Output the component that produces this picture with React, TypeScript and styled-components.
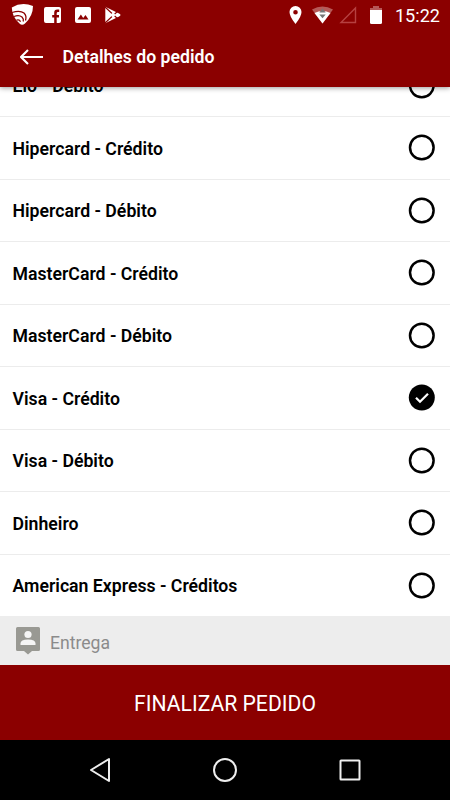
import React from "react";
import styled, { createGlobalStyle } from "styled-components";

const GlobalStyle = createGlobalStyle`
  * { box-sizing: border-box; }
  body { margin: 0; background: #000; font-family: Roboto, "Liberation Sans", sans-serif; }
  svg { display: block; flex: none; }
`;

const Screen = styled.div`
  width: 450px;
  height: 800px;
  display: flex;
  flex-direction: column;
  overflow: hidden;
  background: #fff;
`;

const Header = styled.header`
  height: 87px;
  flex: none;
  z-index: 1;
  background: #8b0000;
  color: #fff;
  box-shadow: 0 1px 5px rgba(0, 0, 0, 0.4);
`;

const StatusBar = styled.div`
  height: 30px;
  display: flex;
  align-items: center;
  justify-content: space-between;
  padding: 0 10px;
`;

const Notifications = styled.div`
  display: flex;
`;

const SystemStatus = styled.div`
  display: flex;
  align-items: center;
`;

const Clock = styled.time`
  font-size: 18.1px;
  line-height: 30px;
  margin-top: 2px;
`;

const Toolbar = styled.div`
  height: 57px;
  display: flex;
  align-items: center;
  padding: 0 0 3px 20px;
`;

const BackButton = styled.button`
  width: 42.5px;
  height: 24px;
  padding: 0;
  border: 0;
  background: none;
  color: inherit;
`;

const Title = styled.h1`
  margin: 0;
  font-size: 17.65px;
  font-weight: 600;
  line-height: 24px;
  white-space: nowrap;
`;

const PaymentList = styled.ul`
  height: 529px;
  flex: none;
  margin: 0;
  padding: 0;
  list-style: none;
  display: flex;
  flex-direction: column;
  justify-content: flex-end;
  overflow: hidden;
`;

const PaymentRow = styled.li`
  height: 62.5px;
  flex: none;
  display: flex;
  align-items: center;
  justify-content: space-between;
  padding: 0 15px 0 12.5px;
  border-bottom: 1px solid #ececec;
  color: #000;
  font-size: 17.68px;
  font-weight: 600;
  white-space: nowrap;

  &:last-child {
    margin-bottom: -1px;
    border-bottom-color: transparent;
  }
`;

const MethodName = styled.span`
  padding-top: 2px;
`;

const SectionHeader = styled.div`
  height: 49px;
  flex: none;
  display: flex;
  align-items: center;
  padding-left: 16px;
  background: #ededed;
  color: #8b8b8b;
  font-size: 17.6px;
`;

const SectionLabel = styled.span`
  margin: 5px 0 0 10px;
`;

const SubmitButton = styled.button`
  height: 75px;
  flex: none;
  padding: 2px 0 0;
  border: 0;
  background: #8b0000;
  color: #fff;
  font-family: inherit;
  font-size: 21.15px;
`;

const NavigationBar = styled.nav`
  height: 60px;
  flex: none;
  display: flex;
  justify-content: space-between;
  align-items: center;
  padding: 0 87px;
  background: #000;
`;

const NotificationIcons = () => (
  <svg width="115" height="30" viewBox="0 0 115 30" fill="#fff">
    <path d="M1.800 7.500q10-6 21.200-1.500q0 10-8 17.500q-3 2.500-5.500 0Q2 17 1.800 7.500Z" />
    <g fill="none" stroke="#8b0000" strokeWidth="1.300">
      <path d="M2 12.500q8-2.500 12 .5q3 3 1.500 7.500" />
      <path d="M4 16.500q5-2 8 .5q2 2 1.200 4.500" />
      <path d="M6.500 20.200q3-1 4 1.500" />
    </g>
    <path fillRule="evenodd" d="M36 7h13a2 2 0 0 1 2 2v12a2 2 0 0 1-2 2h-2.300v-5.500h2.300v-2.500h-2.300v-1.800q0-1.200 1.300-1.200h1.200V9.500h-2q-3 0-3 3.300V15h-2v2.500h2V23H36a2 2 0 0 1-2-2V9a2 2 0 0 1 2-2Z" />
    <path fillRule="evenodd" d="M67 7h12a2 2 0 0 1 2 2v12a2 2 0 0 1-2 2H67a2 2 0 0 1-2-2V9a2 2 0 0 1 2-2Zm.5 12.500h11l-3-4.500-2.300 3-2.300-3.500Z" />
    <path d="M95.300 6.800 109 13.500q3 1.500 0 3L95.300 23.200Z" />
    <path d="m95 7 13 12M95 23l13-12" fill="none" stroke="#8b0000" strokeWidth="1.100" />
    <path d="m103 12.300 2.600 2.700-2.600 2.700-2.600-2.700Z" />
  </svg>
);

const SystemIcons = () => (
  <svg width="106" height="30" viewBox="0 0 106 30" fill="#fff">
    <path fillRule="evenodd" d="M6.500 6a6 6 0 0 1 6 6q0 4.500-6 12-6-7.500-6-12a6 6 0 0 1 6-6Zm0 4a2.300 2.300 0 1 0 0 4.600A2.300 2.300 0 0 0 6.500 10Z" />
    <path d="M23 9.500q10.500-6 21 0L33.500 23.500Z" fill="#b65a58" />
    <path d="M25.500 13q8-4 16 0l-8 10.500Z" />
    <path d="m30.300 12.500 3.200-4 3.200 4ZM30.300 14.500h6.400l-3.200 3.800Z" fill="#777" />
    <path d="M66.500 8v14.500H52Z" fill="none" stroke="#b64040" strokeWidth="1.400" />
    <path d="M81 10V8h3V6h6v2h3v2Z" fill="#b65858" />
    <path d="M81 10h12v12.500a1.500 1.500 0 0 1-1.500 1.500h-9a1.500 1.500 0 0 1-1.500-1.500Z" />
  </svg>
);

const BackArrow = () => (
  <svg width="24" height="24" viewBox="0 0 24 24" fill="none" stroke="#fff" strokeWidth="2.100">
    <path d="M23 12H1.500M8 5l-7 7 7 7" />
  </svg>
);

const Radio = ({ checked }: { checked: boolean }) => (
  <svg width="27" height="27" viewBox="0 0 27 27" fill="none">
    {checked ? (
      <>
        <circle cx="13.800" cy="13.500" r="13" fill="#000" />
        <path d="m8 13.800 4 4 8-8" stroke="#fff" strokeWidth="2.200" />
      </>
    ) : (
      <circle cx="13.800" cy="13.500" r="11.800" stroke="#000" strokeWidth="2.500" />
    )}
  </svg>
);

const ContactPin = () => (
  <svg width="24" height="28" viewBox="0 0 24 28">
    <path d="M1.500 0h21A1.500 1.500 0 0 1 24 1.500v21a1.500 1.500 0 0 1-1.500 1.500H16l-4 3.500L8 24H1.500A1.500 1.500 0 0 1 0 22.500v-21A1.500 1.500 0 0 1 1.500 0Z" fill="#999993" />
    <circle cx="12" cy="7.500" r="3.600" fill="#f5f5f5" />
    <path d="M4.500 18v-1.500q0-4 7.500-4t7.500 4V18Z" fill="#f5f5f5" />
  </svg>
);

const methods = [
  "Elo - Débito",
  "Hipercard - Crédito",
  "Hipercard - Débito",
  "MasterCard - Crédito",
  "MasterCard - Débito",
  "Visa - Crédito",
  "Visa - Débito",
  "Dinheiro",
  "American Express - Créditos",
];

export default function App() {
  return (
    <>
      <GlobalStyle />
      <Screen>
        <Header>
          <StatusBar>
            <Notifications><NotificationIcons /></Notifications>
            <SystemStatus><SystemIcons /><Clock>15:22</Clock></SystemStatus>
          </StatusBar>
          <Toolbar>
            <BackButton aria-label="Voltar"><BackArrow /></BackButton>
            <Title>Detalhes do pedido</Title>
          </Toolbar>
        </Header>
        <PaymentList>
          {methods.map((method) => (
            <PaymentRow key={method}>
              <MethodName>{method}</MethodName>
              <Radio checked={method === "Visa - Crédito"} />
            </PaymentRow>
          ))}
        </PaymentList>
        <SectionHeader>
          <ContactPin />
          <SectionLabel>Entrega</SectionLabel>
        </SectionHeader>
        <SubmitButton>FINALIZAR PEDIDO</SubmitButton>
        <NavigationBar>
          <svg width="26" height="26" viewBox="0 0 26 26" fill="none" stroke="#eee" strokeWidth="2" strokeLinejoin="round">
            <path d="M22 2v22L4 13Z" />
          </svg>
          <svg width="26" height="26" viewBox="0 0 26 26" fill="none" stroke="#eee" strokeWidth="2">
            <circle cx="13" cy="13" r="11" />
          </svg>
          <svg width="26" height="26" viewBox="0 0 26 26" fill="none" stroke="#eee" strokeWidth="2">
            <rect x="3.500" y="3.500" width="19" height="19" rx=".5" />
          </svg>
        </NavigationBar>
      </Screen>
    </>
  );
}
